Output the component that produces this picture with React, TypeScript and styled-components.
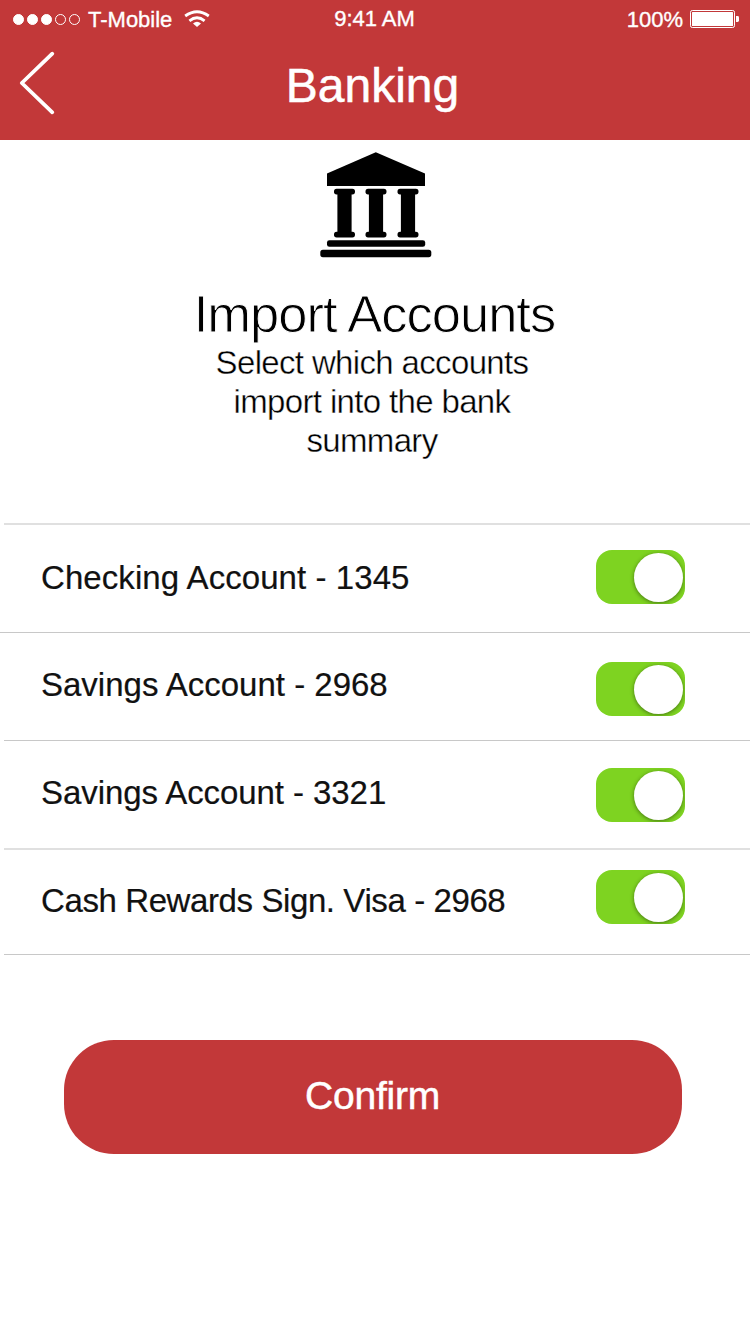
import React, { useState } from 'react';
import styled, { createGlobalStyle } from 'styled-components';

const RED = '#c23839';

const GlobalStyle = createGlobalStyle`
  * { box-sizing: border-box; }
  body {
    margin: 0;
    background: #fff;
    font-family: "Liberation Sans", Arial, sans-serif;
  }
`;

const Screen = styled.div`
  width: 750px;
  height: 1334px;
  overflow: hidden;
  display: flex;
  flex-direction: column;
  background: #fff;
`;

const Header = styled.header`
  height: 140px;
  flex: none;
  background: ${RED};
  color: #fff;
`;

const StatusBar = styled.div`
  height: 38px;
  padding: 0 10px 0 12px;
  display: grid;
  grid-template-columns: 1fr auto 1fr;
  align-items: center;
  font-size: 22px;
  line-height: 36px;
  white-space: nowrap;
  -webkit-text-stroke: 0.35px #fff;
`;

const StatusText = styled.span`
  padding-top: 2px;
`;

const Clock = styled.span`
  padding-right: 3px;
`;

const Carrier = styled.div`
  display: flex;
  align-items: center;
`;

const Dots = styled.div`
  display: flex;
  gap: 3px;
  margin: 0 8px 0 1px;
`;

const Dot = styled.i<{ $filled: boolean }>`
  width: 11px;
  height: 11px;
  border-radius: 50%;
  border: 1px solid #fff;
  background: ${p => (p.$filled ? '#fff' : 'transparent')};
`;

const WifiIcon = styled.svg`
  margin-left: 12px;
`;

const Power = styled.div`
  display: flex;
  align-items: center;
  justify-content: flex-end;
  gap: 7px;
`;

const NavBar = styled.div`
  height: 95px;
  display: grid;
  grid-template-columns: 100px 1fr 100px;
  align-items: center;
`;

const BackButton = styled.button`
  width: 40px;
  height: 66px;
  margin: 0 0 5px 18px;
  padding: 0;
  border: 0;
  background: none;
`;

const Title = styled.h1`
  margin: 0;
  padding-right: 5px;
  font-size: 48px;
  line-height: 95px;
  font-weight: 400;
  text-align: center;
  -webkit-text-stroke: 0.5px #fff;
`;

const Intro = styled.section`
  height: 383px;
  flex: none;
  padding-top: 11px;
  display: flex;
  flex-direction: column;
  align-items: center;
`;

const BankSvg = styled.svg`
  margin-left: 1px;
`;

const Heading = styled.h2`
  margin: 26px 1px 0 0;
  font-size: 52.5px;
  line-height: 59px;
  font-weight: 400;
  letter-spacing: -1px;
  color: #000;
  -webkit-text-stroke: 0.9px #fff;
`;

const Lead = styled.p`
  margin: 0;
  padding-right: 6px;
  width: 340px;
  font-size: 33px;
  line-height: 39px;
  letter-spacing: -0.65px;
  text-align: center;
  color: #000;
  -webkit-text-stroke: 0.4px #fff;
`;

const AccountList = styled.ul`
  margin: 0;
  padding: 0;
  list-style: none;
`;

const Rule = styled.div<{ $inset: number; $soft?: boolean }>`
  height: ${p => (p.$soft ? 2 : 1)}px;
  margin: 0 0 ${p => (p.$soft ? -1 : 0)}px ${p => p.$inset}px;
  background: ${p => (p.$soft ? '#e0e0e0' : '#c8c8c8')};
`;

const AccountRow = styled.li<{ $height: number }>`
  height: ${p => p.$height}px;
  padding: 0 65px 0 41px;
  display: flex;
  align-items: flex-start;
  justify-content: space-between;
`;

const AccountName = styled.span<{ $top: number; $tracking: number }>`
  margin-top: ${p => p.$top}px;
  font-size: 33px;
  line-height: 40px;
  letter-spacing: ${p => p.$tracking}px;
  color: #111;
  white-space: nowrap;
  -webkit-text-stroke: 0.2px #111;
`;

const Switch = styled.button<{ $top: number; $on: boolean }>`
  width: 89px;
  height: 54px;
  margin-top: ${p => p.$top}px;
  padding: 2.5px;
  display: flex;
  justify-content: ${p => (p.$on ? 'flex-end' : 'flex-start')};
  overflow: hidden;
  border: 0;
  border-radius: 16px;
  background: ${p => (p.$on ? '#7ed321' : '#ccc')};
`;

const Knob = styled.span`
  width: 49px;
  height: 49px;
  border-radius: 50%;
  background: #fff;
  box-shadow: 0 1px 4px rgba(0, 0, 0, 0.45);
`;

const ConfirmButton = styled.button`
  width: 618px;
  height: 114px;
  margin: 85px 0 0 64px;
  padding: 0 1px 2px 0;
  border: 0;
  border-radius: 50px;
  background: ${RED};
  color: #fff;
  font: 400 39px/112px "Liberation Sans", Arial, sans-serif;
  letter-spacing: -0.2px;
  -webkit-text-stroke: 0.5px #fff;
`;

interface Account {
  name: string;
  height: number;
  nameTop: number;
  switchTop: number;
  inset: number;
  tracking: number;
  soft?: boolean;
}

const accounts: Account[] = [
  { name: 'Checking Account - 1345', height: 108, nameTop: 34, switchTop: 26, inset: 4, tracking: 0.07, soft: true },
  { name: 'Savings Account - 2968', height: 107, nameTop: 32, switchTop: 29, inset: 0, tracking: 0 },
  { name: 'Savings Account - 3321', height: 107, nameTop: 32, switchTop: 27, inset: 4, tracking: -0.07 },
  { name: 'Cash Rewards Sign. Visa - 2968', height: 105, nameTop: 32, switchTop: 21, inset: 4, tracking: -0.4, soft: true },
];

const column = (x: number) => (
  <g key={x}>
    <rect x={x} y="37.8" width="21" height="5.6" rx="2.6" />
    <rect x={x + 3.4} y="40" width="14.2" height="44" />
    <rect x={x} y="80.8" width="21" height="5.6" rx="2.6" />
  </g>
);

function BankIcon() {
  return (
    <BankSvg width="112" height="107" viewBox="0 0 112 107" fill="#000">
      <path d="M7 22.5 55.8 1.2 105 22.5V35H7z" />
      {[14, 45.5, 77.5].map(column)}
      <rect x="7" y="89.2" width="98.2" height="6.6" rx="2.4" />
      <rect x="0.3" y="98.8" width="111" height="7.4" rx="2.6" />
    </BankSvg>
  );
}

function AccountItem({ account }: { account: Account }) {
  const [on, setOn] = useState(true);
  return (
    <>
      <Rule $inset={account.inset} $soft={account.soft} />
      <AccountRow $height={account.height}>
        <AccountName $top={account.nameTop} $tracking={account.tracking}>
          {account.name}
        </AccountName>
        <Switch
          $top={account.switchTop}
          $on={on}
          role="switch"
          aria-checked={on}
          onClick={() => setOn(!on)}
        >
          <Knob />
        </Switch>
      </AccountRow>
    </>
  );
}

export default function App() {
  return (
    <Screen>
      <GlobalStyle />
      <Header>
        <StatusBar>
          <Carrier>
            <Dots>
              {[true, true, true, false, false].map((filled, i) => (
                <Dot key={i} $filled={filled} />
              ))}
            </Dots>
            <StatusText>T-Mobile</StatusText>
            <WifiIcon width="26" height="18" viewBox="0 0 26 18" fill="none" stroke="#fff" strokeWidth="2.8">
              <path d="M1.2 6Q13-2.6 24.8 6" />
              <path d="M5.4 10.8Q13 4.6 20.6 10.8" />
              <path d="M9 13.4Q13 10 17 13.4L13 17z" fill="#fff" stroke="none" />
            </WifiIcon>
          </Carrier>
          <Clock>9:41 AM</Clock>
          <Power>
            <StatusText>100%</StatusText>
            <svg width="50" height="18" viewBox="0 0 50 18" fill="none">
              <rect x="0.5" y="0.5" width="44" height="17" rx="1.8" stroke="#fff" />
              <rect x="2" y="2" width="41" height="14" rx="0.6" fill="#fff" />
              <path d="M46 6h1.6q1.4 0 1.4 1.4v3.2q0 1.4-1.4 1.4H46z" fill="#fff" />
            </svg>
          </Power>
        </StatusBar>
        <NavBar>
          <BackButton aria-label="Back">
            <svg width="40" height="66" viewBox="0 0 40 66" fill="none">
              <path d="M34.3 3.7 3.8 33 34.3 62.3" stroke="#fff" strokeWidth="3.8" strokeLinecap="round" strokeLinejoin="round" />
            </svg>
          </BackButton>
          <Title>Banking</Title>
        </NavBar>
      </Header>
      <Intro>
        <BankIcon />
        <Heading>Import Accounts</Heading>
        <Lead>Select which accounts import into the bank summary</Lead>
      </Intro>
      <AccountList>
        {accounts.map(a => (
          <AccountItem key={a.name} account={a} />
        ))}
        <Rule $inset={4} />
      </AccountList>
      <ConfirmButton>Confirm</ConfirmButton>
    </Screen>
  );
}
